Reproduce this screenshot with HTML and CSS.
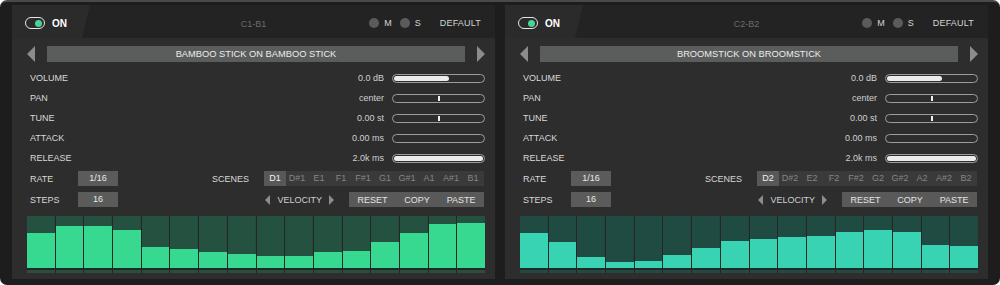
FILE: index.html
```html
<!DOCTYPE html>
<html lang="en">
<head>
  <meta charset="UTF-8">
  <title>Drum Sequencer</title>
  <link rel="stylesheet" href="styles.css">
</head>
<body>

  <div class="frame">

    <!-- left channel -->
    <div class="panel">
      <div class="head">
        <div class="tab">
          <span class="toggle"><span class="knob"></span></span>
          <span class="on">ON</span>
        </div>
        <div class="title">C1-B1</div>
        <div class="ms">
          <span class="dot"></span><span>M</span>
          <span class="dot"></span><span>S</span>
          <span class="default">DEFAULT</span>
        </div>
      </div>

      <div class="preset">
        <span class="arrow-left"></span>
        <div class="preset-name">BAMBOO STICK ON BAMBOO STICK</div>
        <span class="arrow-right"></span>
      </div>

      <div class="params">
        <div class="row"><span class="label">VOLUME</span><span class="value">0.0 dB</span><div class="slider"><div class="fill" style="width: 62%"></div></div></div>
        <div class="row"><span class="label">PAN</span><span class="value">center</span><div class="slider"><div class="tick"></div></div></div>
        <div class="row"><span class="label">TUNE</span><span class="value">0.00 st</span><div class="slider"><div class="tick"></div></div></div>
        <div class="row"><span class="label">ATTACK</span><span class="value">0.00 ms</span><div class="slider"></div></div>
        <div class="row"><span class="label">RELEASE</span><span class="value">2.0k ms</span><div class="slider"><div class="fill" style="width: 100%"></div></div></div>
      </div>

      <div class="seq-row">
        <span class="label short">RATE</span>
        <div class="box">1/16</div>
        <span class="label scenes-label">SCENES</span>
        <div class="scenes">
          <span class="scene active">D1</span><span class="scene">D#1</span><span class="scene">E1</span><span class="scene">F1</span><span class="scene">F#1</span><span class="scene">G1</span><span class="scene">G#1</span><span class="scene">A1</span><span class="scene">A#1</span><span class="scene">B1</span>
        </div>
      </div>
      <div class="seq-row">
        <span class="label short">STEPS</span>
        <div class="box">16</div>
        <div class="velocity">
          <span class="mini-left"></span><span>VELOCITY</span><span class="mini-right"></span>
        </div>
        <div class="actions"><span>RESET</span><span>COPY</span><span>PASTE</span></div>
      </div>

      <div class="bars green">
        <div class="step"><div class="lvl" style="height: 35px"></div></div>
        <div class="step"><div class="lvl" style="height: 42px"></div></div>
        <div class="step"><div class="lvl" style="height: 42px"></div></div>
        <div class="step"><div class="lvl" style="height: 38px"></div></div>
        <div class="step"><div class="lvl" style="height: 21px"></div></div>
        <div class="step"><div class="lvl" style="height: 19px"></div></div>
        <div class="step"><div class="lvl" style="height: 16px"></div></div>
        <div class="step"><div class="lvl" style="height: 14px"></div></div>
        <div class="step"><div class="lvl" style="height: 12px"></div></div>
        <div class="step"><div class="lvl" style="height: 12px"></div></div>
        <div class="step"><div class="lvl" style="height: 16px"></div></div>
        <div class="step"><div class="lvl" style="height: 17px"></div></div>
        <div class="step"><div class="lvl" style="height: 26px"></div></div>
        <div class="step"><div class="lvl" style="height: 35px"></div></div>
        <div class="step"><div class="lvl" style="height: 44px"></div></div>
        <div class="step"><div class="lvl" style="height: 45px"></div></div>
      </div>
    </div>

    <!-- right channel -->
    <div class="panel">
      <div class="head">
        <div class="tab">
          <span class="toggle"><span class="knob"></span></span>
          <span class="on">ON</span>
        </div>
        <div class="title">C2-B2</div>
        <div class="ms">
          <span class="dot"></span><span>M</span>
          <span class="dot"></span><span>S</span>
          <span class="default">DEFAULT</span>
        </div>
      </div>

      <div class="preset">
        <span class="arrow-left"></span>
        <div class="preset-name">BROOMSTICK ON BROOMSTICK</div>
        <span class="arrow-right"></span>
      </div>

      <div class="params">
        <div class="row"><span class="label">VOLUME</span><span class="value">0.0 dB</span><div class="slider"><div class="fill" style="width: 62%"></div></div></div>
        <div class="row"><span class="label">PAN</span><span class="value">center</span><div class="slider"><div class="tick"></div></div></div>
        <div class="row"><span class="label">TUNE</span><span class="value">0.00 st</span><div class="slider"><div class="tick"></div></div></div>
        <div class="row"><span class="label">ATTACK</span><span class="value">0.00 ms</span><div class="slider"></div></div>
        <div class="row"><span class="label">RELEASE</span><span class="value">2.0k ms</span><div class="slider"><div class="fill" style="width: 100%"></div></div></div>
      </div>

      <div class="seq-row">
        <span class="label short">RATE</span>
        <div class="box">1/16</div>
        <span class="label scenes-label">SCENES</span>
        <div class="scenes">
          <span class="scene active">D2</span><span class="scene">D#2</span><span class="scene">E2</span><span class="scene">F2</span><span class="scene">F#2</span><span class="scene">G2</span><span class="scene">G#2</span><span class="scene">A2</span><span class="scene">A#2</span><span class="scene">B2</span>
        </div>
      </div>
      <div class="seq-row">
        <span class="label short">STEPS</span>
        <div class="box">16</div>
        <div class="velocity">
          <span class="mini-left"></span><span>VELOCITY</span><span class="mini-right"></span>
        </div>
        <div class="actions"><span>RESET</span><span>COPY</span><span>PASTE</span></div>
      </div>

      <div class="bars teal">
        <div class="step"><div class="lvl" style="height: 35px"></div></div>
        <div class="step"><div class="lvl" style="height: 26px"></div></div>
        <div class="step"><div class="lvl" style="height: 11px"></div></div>
        <div class="step"><div class="lvl" style="height: 6px"></div></div>
        <div class="step"><div class="lvl" style="height: 7px"></div></div>
        <div class="step"><div class="lvl" style="height: 13px"></div></div>
        <div class="step"><div class="lvl" style="height: 20px"></div></div>
        <div class="step"><div class="lvl" style="height: 27px"></div></div>
        <div class="step"><div class="lvl" style="height: 29px"></div></div>
        <div class="step"><div class="lvl" style="height: 31px"></div></div>
        <div class="step"><div class="lvl" style="height: 32px"></div></div>
        <div class="step"><div class="lvl" style="height: 36px"></div></div>
        <div class="step"><div class="lvl" style="height: 38px"></div></div>
        <div class="step"><div class="lvl" style="height: 36px"></div></div>
        <div class="step"><div class="lvl" style="height: 23px"></div></div>
        <div class="step"><div class="lvl" style="height: 22px"></div></div>
      </div>
    </div>

  </div>

</body>
</html>
```

FILE: styles.css
```css
body {
  margin: 0;
  background-color: #ffffff;
  font-family: "Liberation Sans", Arial, sans-serif;
  color: #d6d6d6;
}
.frame {
  width: 1000px;
  height: 285px;
  box-sizing: border-box;
  background-color: #1d1d1d;
  border-top: 2px solid #4a4a4a;
  border-radius: 7px;
  padding: 3px 12px 0 12px;
  display: flex;
  gap: 10px;
}
.panel {
  width: 483px;
  height: 274px;
  box-sizing: border-box;
  background-color: #2d2d2d;
  padding: 0 10px 0 15px;
  display: flex;
  flex-direction: column;
}
.head {
  height: 33px;
  margin: 0 -10px 0 -15px;
  background-color: #232323;
  display: grid;
  grid-template-columns: 1fr auto 1fr;
  align-items: center;
}
.tab {
  width: 78px;
  height: 100%;
  box-sizing: border-box;
  padding-left: 13px;
  padding-top: 3px;
  background-color: #2b2b2b;
  clip-path: polygon(0 0, 100% 0, calc(100% - 8px) 100%, 0 100%);
  display: flex;
  align-items: center;
  gap: 7px;
}
.toggle {
  width: 20px;
  height: 12px;
  box-sizing: border-box;
  border: 1.5px solid #e6e6e6;
  border-radius: 6px;
  display: flex;
  align-items: center;
  justify-content: flex-end;
  padding-right: 2px;
}
.knob {
  width: 7px;
  height: 7px;
  border-radius: 50%;
  background-color: #47d39a;
}
.on {
  font-weight: bold;
  font-size: 10px;
  color: #ffffff;
}
.title {
  text-align: center;
  font-size: 9px;
  color: #6b6b6b;
  padding-top: 4px;
}
.ms {
  justify-self: end;
  display: flex;
  align-items: center;
  font-size: 9px;
  color: #d4d4d4;
  padding-right: 14px;
  padding-top: 3px;
}
.dot {
  width: 10px;
  height: 10px;
  border-radius: 50%;
  background-color: #5b5b5b;
  margin: 0 5px 0 8px;
}
.default {
  margin-left: 19px;
  letter-spacing: 0.2px;
}
.preset {
  margin-top: 8px;
  height: 16px;
  display: flex;
  align-items: center;
  gap: 12px;
}
.arrow-left, .arrow-right {
  width: 0;
  height: 0;
  border-top: 8px solid transparent;
  border-bottom: 8px solid transparent;
}
.arrow-left {
  border-right: 8px solid #8c8c8c;
}
.arrow-right {
  border-left: 8px solid #8c8c8c;
}
.preset-name {
  flex: 1;
  height: 16px;
  line-height: 16px;
  background-color: #5b5d5c;
  text-align: center;
  font-size: 9.3px;
  color: #ececec;
}
.params {
  margin-top: 6px;
  display: flex;
  flex-direction: column;
}
.row {
  height: 20px;
  display: flex;
  align-items: center;
  font-size: 9px;
}
.label {
  padding-left: 3px;
  width: 80px;
  font-size: 9px;
  color: #d8d8d8;
}
.value {
  flex: 1;
  text-align: right;
  padding-right: 8px;
  color: #d0d0d0;
}
.slider {
  width: 93px;
  height: 9px;
  box-sizing: border-box;
  border: 1px solid #9c9c9c;
  border-radius: 5px;
  padding: 1px;
  display: flex;
  align-items: center;
}
.slider .fill {
  height: 5px;
  background-color: #ececec;
  border-radius: 3px;
}
.slider .tick {
  width: 2px;
  height: 5px;
  background-color: #f0f0f0;
  margin-left: 44px;
}
.seq-row {
  height: 21px;
  display: flex;
  align-items: center;
  font-size: 9px;
}
.label.short {
  width: 48px;
}
.box {
  width: 40px;
  height: 15px;
  line-height: 15px;
  background-color: #5b5b5b;
  text-align: center;
  color: #e8e8e8;
}
.scenes-label {
  width: auto;
  margin-left: auto;
  margin-right: 15px;
}
.scenes {
  width: 220px;
  height: 15px;
  margin-right: 1px;
  background-color: #3a3a3a;
  display: flex;
}
.scene {
  flex: 1;
  line-height: 15px;
  text-align: center;
  color: #858585;
}
.scene.active {
  background-color: #585858;
  color: #f2f2f2;
}
.velocity {
  margin-left: auto;
  margin-right: 15px;
  display: flex;
  align-items: center;
  gap: 7px;
  color: #d0d0d0;
}
.mini-left, .mini-right {
  width: 0;
  height: 0;
  border-top: 5px solid transparent;
  border-bottom: 5px solid transparent;
}
.mini-left {
  border-right: 5px solid #8c8c8c;
}
.mini-right {
  border-left: 5px solid #8c8c8c;
}
.actions {
  width: 135px;
  height: 15px;
  margin-right: 1px;
  background-color: #595959;
  display: flex;
  justify-content: space-around;
  align-items: center;
  color: #e4e4e4;
}
.bars {
  margin-top: 6px;
  height: 57px;
  display: flex;
  gap: 1px;
  background-color: #262626;
}
.step {
  flex: 1;
  display: flex;
  flex-direction: column;
  justify-content: flex-end;
  border-bottom: 3px solid;
}
.step .lvl {
  margin-bottom: 2px;
}
.green .step {
  background: linear-gradient(#255240, #255240) top / 100% 52px no-repeat;
  border-bottom-color: #294f40;
}
.green .lvl {
  background-color: #36d98f;
}
.teal .step {
  background: linear-gradient(#1f4b42, #1f4b42) top / 100% 52px no-repeat;
  border-bottom-color: #234a42;
}
.teal .lvl {
  background-color: #37d3b2;
}
```
